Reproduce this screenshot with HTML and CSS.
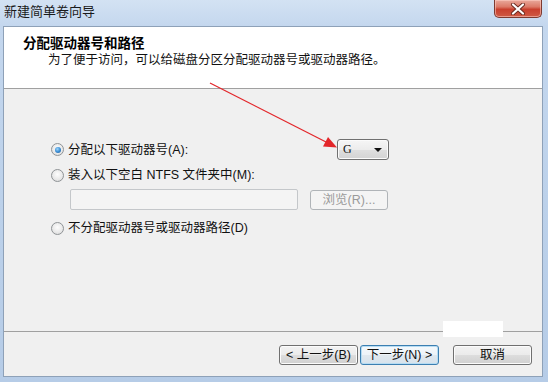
FILE: index.html
```html
<!DOCTYPE html>
<html lang="zh-CN">
<head>
<meta charset="utf-8">
<title>新建简单卷向导</title>
<link rel="stylesheet" href="styles.css">
</head>
<body>
<div class="window">
  <div class="titlebar">
    <span class="title">新建简单卷向导</span>
    <div class="close">
      <svg width="16" height="12" viewBox="0 0 16 12">
        <path d="M3 1.5 L13 10.5 M13 1.5 L3 10.5" stroke="#6a2a20" stroke-width="4" stroke-linecap="round"/>
        <path d="M3 1.5 L13 10.5 M13 1.5 L3 10.5" stroke="#ffffff" stroke-width="2.2" stroke-linecap="round"/>
      </svg>
    </div>
  </div>
  <div class="client">
    <div class="header">
      <div class="h-title">分配驱动器号和路径</div>
      <div class="h-sub">为了便于访问，可以给磁盘分区分配驱动器号或驱动器路径。</div>
    </div>
    <div class="body">
      <div class="opts">
        <div class="row row1">
          <div class="radio checked"><span class="dot"></span><span>分配以下驱动器号(A):</span></div>
          <div class="combo"><span class="combo-val">G</span><span class="caret"></span></div>
        </div>
        <div class="row row2">
          <div class="radio"><span class="dot"></span><span>装入以下空白 NTFS 文件夹中(M):</span></div>
        </div>
        <div class="row row3">
          <div class="input"></div>
          <div class="btn browse">浏览(R)...</div>
        </div>
        <div class="row row4">
          <div class="radio"><span class="dot"></span><span>不分配驱动器号或驱动器路径(D)</span></div>
        </div>
      </div>
    </div>
    <div class="sep"></div>
    <div class="footer">
      <div class="btn nav">&lt; 上一步(B)</div>
      <div class="btn nav default">下一步(N) &gt;</div>
      <div class="btn nav cancel">取消</div>
    </div>
  </div>
  <svg class="arrow" width="548" height="382" viewBox="0 0 548 382">
    <line x1="210" y1="83" x2="328" y2="143" stroke="#e3262a" stroke-width="1.3"/>
    <polygon points="337,147.5 323,146.5 328,137" fill="#e3262a"/>
  </svg>
  <div class="mask"></div>
</div>
</body>
</html>
```

FILE: styles.css
```css
html, body {
  margin: 0;
  padding: 0;
}

body {
  width: 548px;
  height: 382px;
  overflow: hidden;
  font-family: "Liberation Sans", "Noto Sans CJK SC", sans-serif;
  color: #111;
}

.window {
  position: relative;
  width: 548px;
  height: 382px;
  box-sizing: border-box;
  padding: 0 5px 5px 3px;
  display: flex;
  flex-direction: column;
  background: linear-gradient(180deg, #d3e2f3 0px, #c4d7ee 26px, #bcd1ea 200px, #b6cce7 382px);
}

.titlebar {
  height: 26px;
  display: flex;
  justify-content: space-between;
  align-items: flex-start;
}

.title {
  padding-left: 1px;
  font-size: 13px;
  line-height: 24px;
  color: #1a1a1a;
}

.close {
  width: 48px;
  height: 18px;
  margin-right: 1px;
  box-sizing: border-box;
  border: 1px solid #7d3a30;
  border-top: none;
  border-radius: 0 0 5px 5px;
  background: linear-gradient(180deg, #e9a99c 0%, #dc7a68 40%, #c9402e 55%, #cf5a44 100%);
  box-shadow: inset 0 0 0 1px rgba(255, 210, 200, 0.55);
  display: flex;
  align-items: center;
  justify-content: center;
}

.client {
  flex: 1;
  display: flex;
  flex-direction: column;
  border: 1px solid #8ea1b8;
  background: #f0f0f0;
}

.header {
  height: 61px;
  border-bottom: 1px solid #a0a0a0;
  background: #ffffff;
}

.h-title {
  padding: 9px 0 0 19px;
  font-size: 13.5px;
  font-weight: bold;
  line-height: 16px;
  color: #000;
}

.h-sub {
  padding-left: 44px;
  font-size: 12.5px;
  line-height: 16px;
  color: #111;
}

.body {
  flex: 1;
  padding: 50px 0 0 47px;
}

.opts {
  width: 338px;
  display: flex;
  flex-direction: column;
}

.row {
  display: flex;
  align-items: center;
  justify-content: space-between;
}

.row1 { height: 21px; }
.row2 { height: 16px; margin-top: 7px; }
.row3 { height: 21px; margin-top: 6px; }
.row4 { height: 16px; margin-top: 10px; }

.radio {
  display: flex;
  align-items: center;
  font-size: 12.5px;
  line-height: 16px;
  color: #111;
}

.dot {
  width: 13px;
  height: 13px;
  box-sizing: border-box;
  margin-right: 4px;
  border-radius: 50%;
  border: 1px solid #8f9396;
  background: radial-gradient(circle at 50% 40%, #fdfdfd 0%, #e8e8e8 60%, #d2d2d2 100%);
  position: relative;
}

.radio.checked .dot::after {
  content: "";
  position: absolute;
  left: 2.5px;
  top: 2.5px;
  width: 6px;
  height: 6px;
  border-radius: 50%;
  background: radial-gradient(circle at 40% 35%, #9fd6fb 0%, #3c8fd5 50%, #1c5797 100%);
}

.combo {
  width: 52px;
  height: 21px;
  box-sizing: border-box;
  border: 1px solid #707070;
  border-radius: 3px;
  background: linear-gradient(180deg, #f6f6f6 0%, #ececec 50%, #dfdfdf 51%, #d3d3d3 100%);
  box-shadow: inset 0 0 0 1px #fbfbfb;
  display: flex;
  align-items: center;
  justify-content: space-between;
  padding: 0 6px 0 5px;
  font-size: 12px;
}

.combo-val {
  font-family: "Liberation Serif", serif;
  font-size: 12px;
  color: #111;
}

.caret {
  width: 0;
  height: 0;
  border-top: 4px solid #111;
  border-left: 4px solid transparent;
  border-right: 4px solid transparent;
}

.input {
  width: 228px;
  height: 21px;
  margin-left: 19px;
  box-sizing: border-box;
  border: 1px solid #c4c7ca;
  border-radius: 2px;
  background: #f4f4f4;
}

.btn {
  box-sizing: border-box;
  height: 20px;
  border: 1px solid #707070;
  border-radius: 3px;
  background: linear-gradient(180deg, #f3f3f3 0%, #ebebeb 50%, #dddddd 51%, #d0d0d0 100%);
  box-shadow: inset 0 0 0 1px #fcfcfc;
  display: flex;
  align-items: center;
  justify-content: center;
  font-size: 12.5px;
  line-height: 16px;
  color: #111;
  white-space: nowrap;
}

.browse {
  width: 78px;
  margin-right: 1px;
  border-color: #b0b4b8;
  background: #f4f4f4;
  box-shadow: none;
  color: #9a9a9a;
}

.sep {
  height: 1px;
  background: #a0a0a0;
}

.footer {
  height: 44px;
  box-sizing: border-box;
  padding: 13px 10px 0 0;
  display: flex;
  justify-content: flex-end;
  align-items: flex-start;
}

.nav {
  width: 79px;
}

.default {
  margin-left: 2px;
  border-color: #3c7fb1;
  background: linear-gradient(180deg, #f5f9fc 0%, #edf3f8 50%, #e0e8ef 51%, #d6e2ec 100%);
  box-shadow: inset 0 0 0 1px #b6dcf3;
}

.cancel {
  margin-left: 14px;
}

.arrow {
  position: absolute;
  left: 0;
  top: 0;
  pointer-events: none;
}

.mask {
  position: absolute;
  left: 443px;
  top: 321px;
  width: 60px;
  height: 16px;
  background: #ffffff;
}
```
